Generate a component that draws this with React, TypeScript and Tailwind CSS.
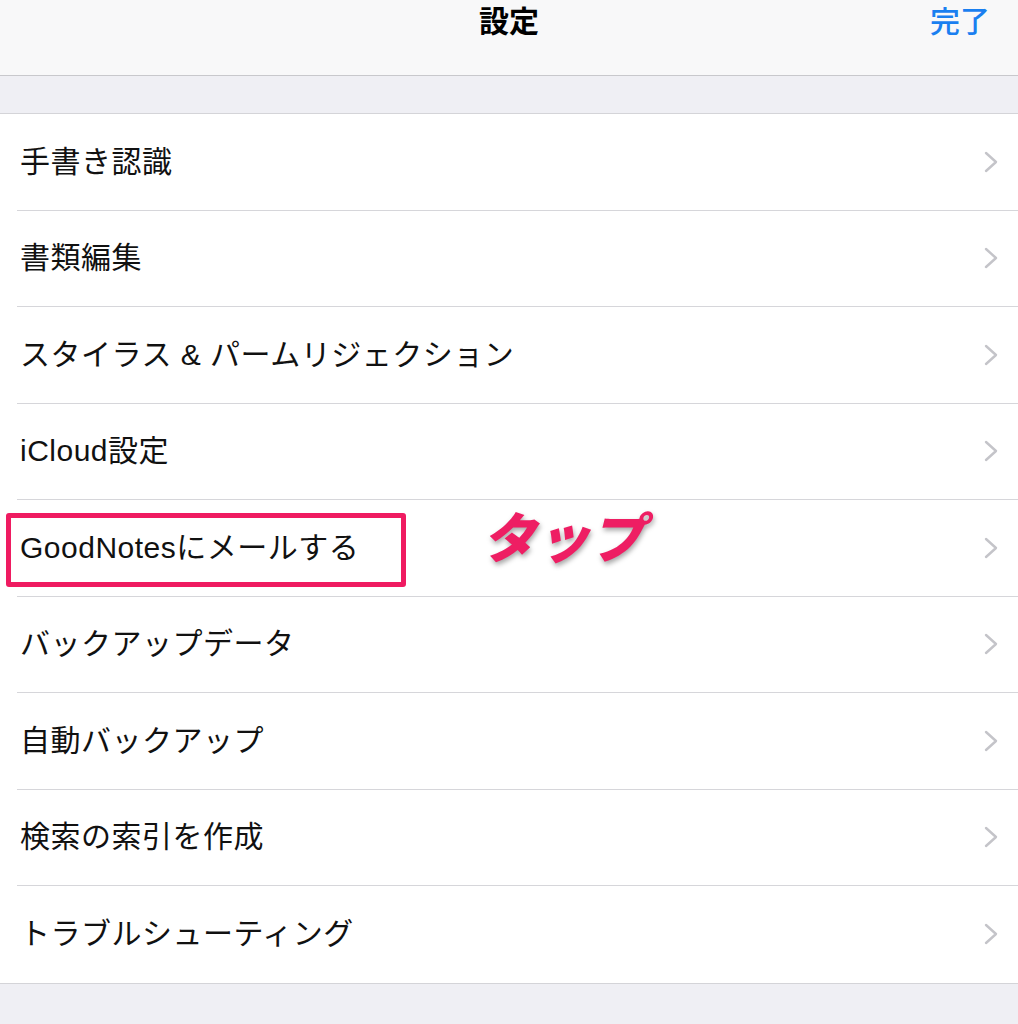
const items = [
  '手書き認識',
  '書類編集',
  'スタイラス & パームリジェクション',
  'iCloud設定',
  'GoodNotesにメールする',
  'バックアップデータ',
  '自動バックアップ',
  '検索の索引を作成',
  'トラブルシューティング',
];

const font = { fontFamily: '"Liberation Sans", "Noto Sans CJK JP", sans-serif' };

const Chevron = () => (
  <svg width="14" height="22" viewBox="0 0 14 22" className="shrink-0">
    <polyline points="2,2 12,11 2,20" fill="none" stroke="#c4c4c9" strokeWidth="2.4" strokeLinecap="round" strokeLinejoin="round" />
  </svg>
);

export default function App() {
  return (
    <div className="w-[1018px] h-[1024px] overflow-hidden bg-[#efeff4]" style={font}>
      {/* nav bar */}
      <div className="relative h-[76px] bg-[#f8f8f9] border-b border-[#c8c8cc]">
        <div className="h-[42px] flex items-center justify-center text-[30px] font-bold text-black">
          設定
        </div>
        <div className="absolute right-[28px] top-0 h-[42px] flex items-center text-[30px] font-medium text-[#1a7ff0]">
          完了
        </div>
      </div>

      <div className="h-[37px]" />

      <div className="bg-white border-t border-[#d4d4d8] border-b">
        {items.map((label, i) => {
          const last = i === items.length - 1;
          return (
            <div key={label} className="relative pl-[17px]">
              <div
                className={`h-[96.5px] flex items-center justify-between pl-[3px] pr-[20px] ${
                  last ? '' : 'border-b border-[#d6d6da]'
                }`}
              >
                <span className="text-[30px] leading-none text-[#111] tracking-[0.5px]">{label}</span>
                <Chevron />
              </div>
              {label === 'GoodNotesにメールする' && (
                <>
                  <div className="absolute left-[6px] top-[13px] w-[400px] h-[74px] border-[5px] border-[#ef1b61] rounded-[3px]" />
                  <div
                    className="absolute left-[482px] top-[8px] text-[54px] font-black italic text-[#ee1e63] leading-none [-webkit-text-stroke:8px_white] [paint-order:stroke_fill] [text-shadow:1px_3px_5px_rgba(0,0,0,0.35)]"
                    style={{ fontFamily: '"Noto Sans CJK JP", sans-serif' }}
                  >
                    タップ
                  </div>
                </>
              )}
            </div>
          );
        })}
      </div>
    </div>
  );
}
